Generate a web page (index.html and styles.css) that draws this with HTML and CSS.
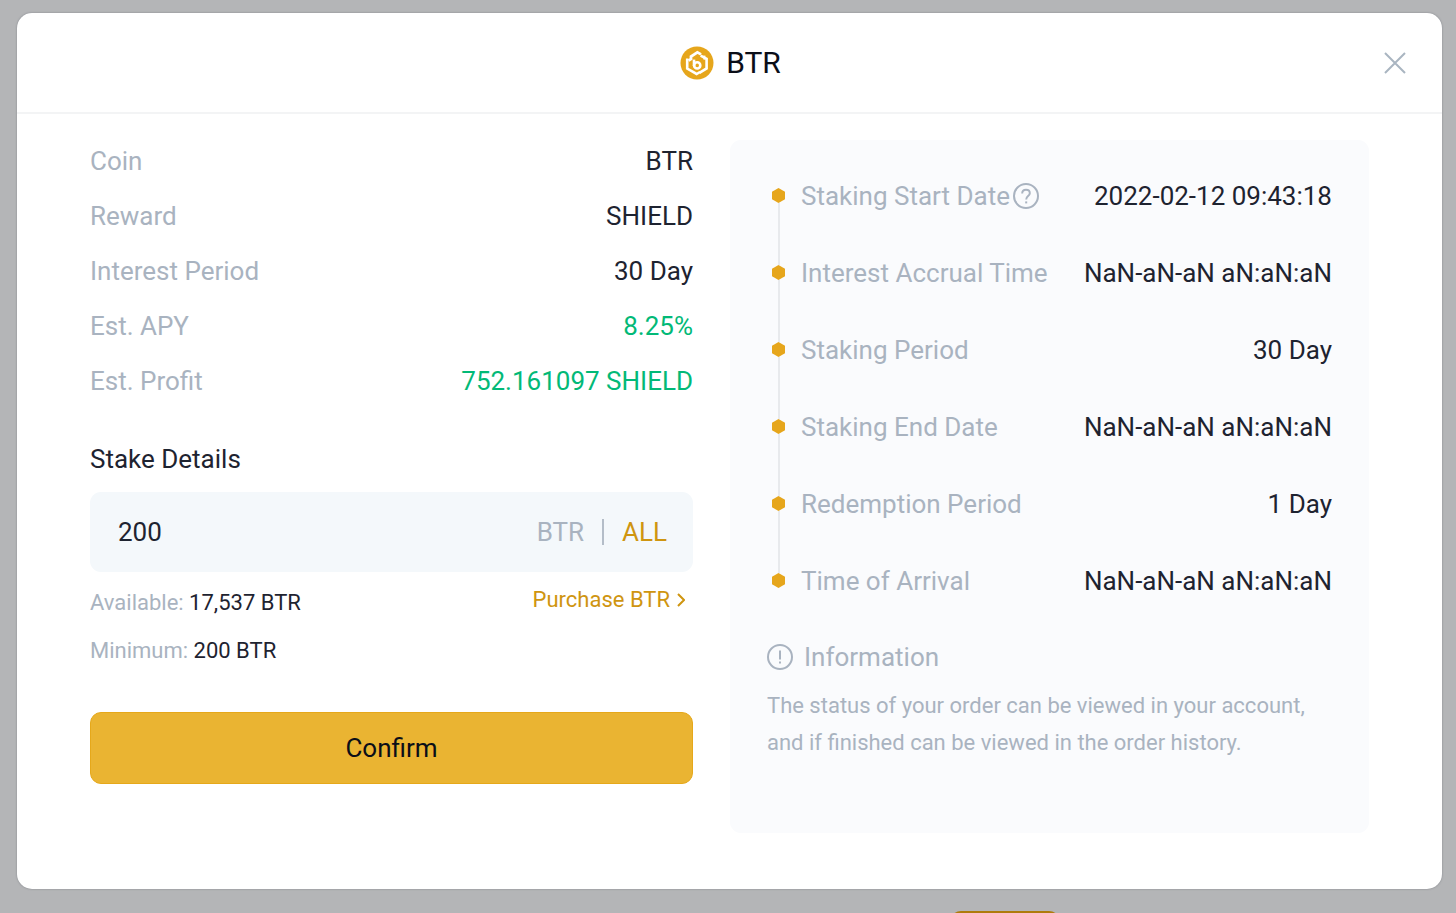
FILE: index.html
```html
<!DOCTYPE html>
<html lang="en">
  <head>
    <meta charset="UTF-8" />
    <meta name="viewport" content="width=device-width, initial-scale=1.0" />
    <title>BTR Staking</title>
    <link rel="stylesheet" href="styles.css" />
  </head>
  <body>
    <div class="overlay">
      <div class="dialog" role="dialog" aria-labelledby="dialogTitle">
        <header class="dialog-header">
          <svg class="logo" viewBox="0 0 34 34" aria-hidden="true">
            <circle cx="17" cy="17" r="16.5" fill="#e6a61c" />
            <g fill="none" stroke="#fff">
              <path d="M7.2 12.4v10.2l9.4 5.4 3.4-2" stroke-width="2.6" />
              <path d="M8.6 14.6l2.4-1.6v-2.4l6.4-4.2 3.6 2" stroke-width="2.8" />
              <path d="M20.6 9.6l6 3.2v9.6l-7.2 4.4" stroke-width="2.6" />
              <path d="M24.4 9.6v4" stroke-width="2" />
              <path d="M14 13.6v6.4" stroke-width="2.6" />
              <circle cx="17.2" cy="19.4" r="3.1" stroke-width="2.6" />
            </g>
          </svg>
          <h1 id="dialogTitle">BTR</h1>
          <button class="close" type="button" aria-label="Close">
            <svg viewBox="0 0 22 22">
              <path d="M1 1l20 20M21 1L1 21" />
            </svg>
          </button>
        </header>

        <div class="dialog-body">
          <!-- Stake form -->
          <form class="stake">
            <dl class="summary">
              <div class="row"><dt>Coin</dt><dd>BTR</dd></div>
              <div class="row"><dt>Reward</dt><dd>SHIELD</dd></div>
              <div class="row"><dt>Interest Period</dt><dd>30 Day</dd></div>
              <div class="row"><dt>Est. APY</dt><dd class="green">8.25%</dd></div>
              <div class="row"><dt>Est. Profit</dt><dd class="green">752.161097 SHIELD</dd></div>
            </dl>

            <label class="stake-label" for="amount">Stake Details</label>
            <div class="amount-box">
              <input type="text" id="amount" name="amount" value="200" />
              <span class="unit">BTR</span>
              <button class="all" type="button">ALL</button>
            </div>

            <div class="notes">
              <div class="limits">
                <p>Available: <span>17,537 BTR</span></p>
                <p>Minimum: <span>200 BTR</span></p>
              </div>
              <a class="purchase" href="#">
                Purchase BTR
                <svg viewBox="0 0 8 14" aria-hidden="true"><path d="M1 1l6 6-6 6" /></svg>
              </a>
            </div>

            <button class="confirm" type="submit">Confirm</button>
          </form>

          <!-- Timeline -->
          <section class="schedule">
            <dl class="timeline">
              <div class="step">
                <dt>
                  Staking Start Date
                  <svg class="round-icon" viewBox="0 0 26 26" aria-hidden="true">
                    <circle cx="13" cy="13" r="12" />
                    <path d="M9.2 10.6c0-2.4 1.6-3.8 3.8-3.8s3.8 1.4 3.8 3.4c0 2.8-3.6 3-3.6 6.2" />
                    <path d="M12.2 19.4h2" />
                  </svg>
                </dt>
                <dd>2022-02-12 09:43:18</dd>
              </div>
              <div class="step"><dt>Interest Accrual Time</dt><dd>NaN-aN-aN aN:aN:aN</dd></div>
              <div class="step"><dt>Staking Period</dt><dd>30 Day</dd></div>
              <div class="step"><dt>Staking End Date</dt><dd>NaN-aN-aN aN:aN:aN</dd></div>
              <div class="step"><dt>Redemption Period</dt><dd>1 Day</dd></div>
              <div class="step"><dt>Time of Arrival</dt><dd>NaN-aN-aN aN:aN:aN</dd></div>
            </dl>

            <h2 class="info-title">
              <svg class="round-icon" viewBox="0 0 26 26" aria-hidden="true">
                <circle cx="13" cy="13" r="12" />
                <path d="M13 6.4v9M13 17.4v2" />
              </svg>
              Information
            </h2>
            <p class="info-text">
              The status of your order can be viewed in your account, and if
              finished can be viewed in the order history.
            </p>
          </section>
        </div>
      </div>

      <!-- top of the stake button on the page below -->
      <div class="page-button"></div>
    </div>
  </body>
</html>
```

FILE: styles.css
```css
* {
  box-sizing: border-box;
}
body {
  margin: 0;
  font-family: Roboto, Arial, sans-serif;
  font-size: 26px;
  line-height: 30px;
  color: #1e2330;
}
h1,
h2,
p,
dl,
dd {
  margin: 0;
  font-weight: 400;
}
button,
input {
  border: 0;
  padding: 0;
  background: none;
  font: inherit;
  color: inherit;
}
button {
  cursor: pointer;
}
svg {
  flex: none;
}

.overlay {
  height: 100vh;
  overflow: hidden;
  padding: 13px 14px 0 17px;
  background-color: #b4b5b7;
}
.dialog {
  background-color: #fff;
  border-radius: 15px;
  box-shadow: 0 0 2px rgba(70, 75, 85, 0.5);
}

/* Header */
.dialog-header {
  display: grid;
  grid-template-columns: 1fr auto auto 1fr;
  align-items: center;
  column-gap: 12px;
  height: 101px;
  padding: 0 36px 0 38px;
  border-bottom: 2px solid #f3f4f5;
}
.logo {
  grid-column: 2;
  width: 34px;
  height: 34px;
}
h1 {
  font-size: 30px;
  color: #0b0e18;
}
.close {
  justify-self: end;
  width: 22px;
  height: 22px;
}
.close svg {
  display: block;
  fill: none;
  stroke: #a9b5c1;
  stroke-width: 2;
}

.dialog-body {
  display: grid;
  grid-template-columns: 603fr 639fr;
  align-items: start;
  gap: 37px;
  padding: 19px 73px 56px;
}

/* Left column */
.row {
  display: flex;
  justify-content: space-between;
  align-items: center;
  height: 55px;
}
dt {
  color: #a9b3c0;
}
.green {
  color: #02b977;
}
.stake-label {
  display: block;
  margin: 36px 0 18px;
}
.amount-box {
  display: flex;
  align-items: center;
  height: 80px;
  padding: 0 26px 0 28px;
  border-radius: 11px;
  background-color: #f4f8fb;
}
.amount-box input {
  flex: 1;
  min-width: 0;
  outline: 0;
}
.unit {
  color: #a9b3c0;
}
.all {
  display: flex;
  align-items: center;
  color: #cf9510;
}
.all::before {
  content: "";
  width: 2px;
  height: 26px;
  margin: 0 18px;
  background-color: #b4bdc8;
}
.notes {
  display: flex;
  justify-content: space-between;
  align-items: flex-start;
  margin: 16px 0 46px;
  font-size: 22px;
}
.limits {
  display: grid;
  gap: 18px;
  color: #a9b3c0;
}
.limits span {
  color: #1e2330;
}
.purchase {
  display: flex;
  align-items: center;
  gap: 7px;
  padding-right: 8px;
  margin-top: -3px;
  color: #cf9510;
  text-decoration: none;
}
.purchase svg {
  width: 8px;
  height: 14px;
  fill: none;
  stroke: currentColor;
  stroke-width: 2;
}
.confirm {
  display: block;
  width: 100%;
  height: 72px;
  border: 1px solid #e6a81a;
  border-radius: 11px;
  background-color: #eab432;
  color: #0b0e18;
}

/* Right column */
.schedule {
  margin-top: 7px;
  padding: 17px 37px 72px;
  border-radius: 11px;
  background-color: #fafbfd;
}
.step {
  display: flex;
  justify-content: space-between;
  align-items: center;
  height: 77px;
  padding-left: 34px;
  position: relative;
}
.step dt {
  display: flex;
  align-items: center;
  gap: 3px;
}
/* hexagon marker and the line that joins it to the next one */
.step::before {
  content: "";
  position: absolute;
  left: 5px;
  top: 31px;
  width: 13px;
  height: 15px;
  background-color: #e6a61c;
  clip-path: polygon(50% 0, 100% 25%, 100% 75%, 50% 100%, 0 75%, 0 25%);
}
.step:not(:last-child)::after {
  content: "";
  position: absolute;
  left: 11px;
  top: 46px;
  width: 2px;
  height: 62px;
  background-color: #e8eaed;
}
.round-icon {
  width: 26px;
  height: 26px;
  fill: none;
  stroke: #a9b3c0;
  stroke-width: 2;
}
.info-title {
  display: flex;
  align-items: center;
  gap: 11px;
  margin-top: 23px;
  font-size: 26px;
  color: #a9b3c0;
}
.info-text {
  margin-top: 15px;
  font-size: 22px;
  line-height: 37px;
  color: #a9b3c0;
}

.page-button {
  width: 110px;
  height: 50px;
  margin: 22px 0 0 933px;
  border-radius: 11px;
  background-color: #ae7b0c;
}
```
